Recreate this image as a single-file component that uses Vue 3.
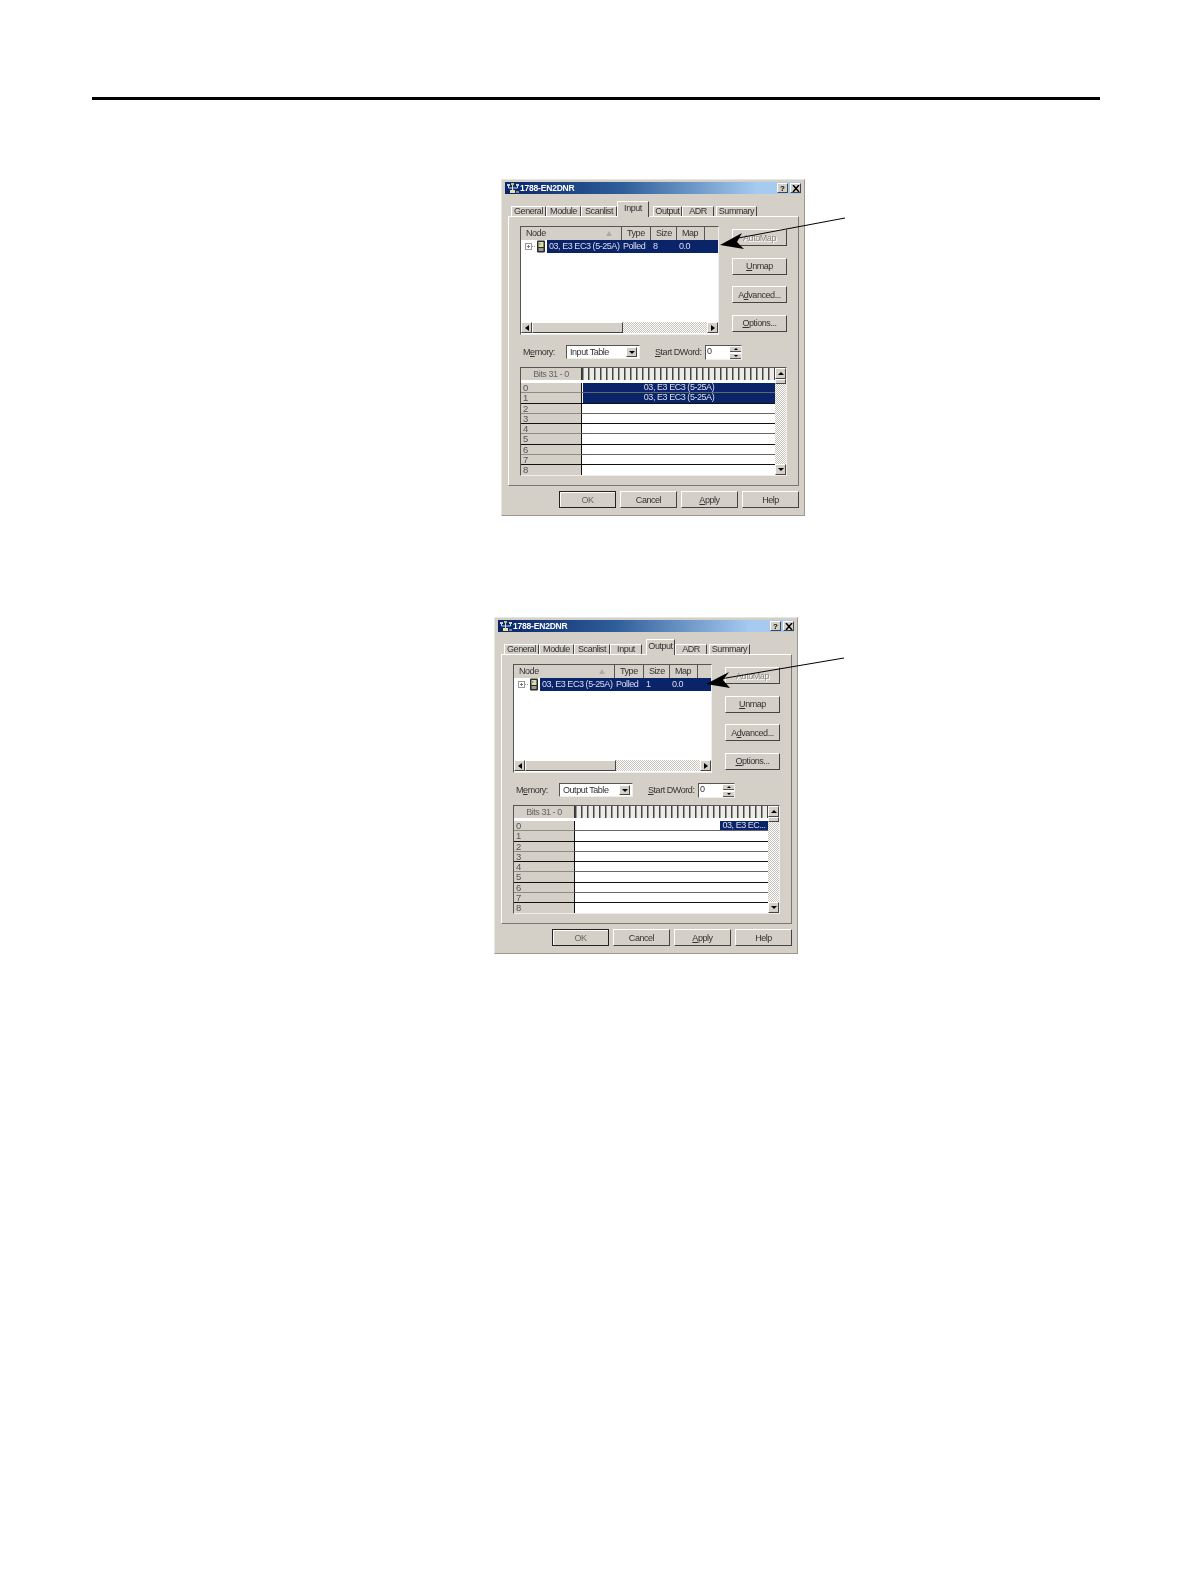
<template>
  <div class="page">
    <div class="rule"></div>
    <div
      v-for="d in dialogs"
      :key="d.name"
      class="figure"
      :class="'figure-' + d.name"
    >
      <div class="dialog">
        <div class="titlebar">
          <svg class="app-icon" width="14" height="12" viewBox="0 0 14 12">
            <rect x="1" y="2" width="3" height="2" fill="#d4d0c8" />
            <rect x="5" y="1" width="3" height="2" fill="#a8d060" />
            <rect x="10" y="2" width="3" height="2" fill="#d4d0c8" />
            <path d="M2.5 4v2h9V4M6.5 3v5" stroke="#cfe0f0" fill="none" />
            <rect x="4" y="8" width="5" height="3" fill="#e8e4a0" />
            <rect x="10" y="9" width="3" height="2" fill="#8a8a8a" />
          </svg>
          <span class="title-text">1788-EN2DNR</span>
          <span class="title-btn title-help">?</span>
          <span class="title-btn">
            <svg width="8" height="7" viewBox="0 0 8 7">
              <path d="M1 0l6 7M7 0L1 7" stroke="#000" stroke-width="1.5" />
            </svg>
          </span>
        </div>

        <div class="tabs">
          <div
            v-for="t in tabs"
            :key="t.label"
            class="tab"
            :class="{ active: t.label === d.tab }"
            :style="{ width: t.width + 'px', marginLeft: t.gap + 'px' }"
          >
            {{ t.label }}
          </div>
        </div>

        <div class="panel">
          <div class="top-row">
            <div class="list sunken">
              <div class="list-head">
                <div class="head-cell col-node">
                  Node<span class="sort-mark"></span>
                </div>
                <div class="head-cell col-type">Type</div>
                <div class="head-cell col-size">Size</div>
                <div class="head-cell col-map">Map</div>
                <div class="head-cell col-rest"></div>
              </div>
              <div class="list-row">
                <div class="tree">
                  <svg width="27" height="13" viewBox="0 0 27 13">
                    <rect x="4.5" y="3.5" width="6" height="6" fill="#fff" stroke="#999" />
                    <path d="M6 6.5h3M7.5 5v3" stroke="#777" fill="none" />
                    <path d="M11 6.5h3" stroke="#999" stroke-dasharray="1 1" fill="none" />
                    <rect x="16" y="0.5" width="8" height="12" rx="1" fill="#2a2a2a" />
                    <rect x="17.5" y="2" width="5" height="5" fill="#d8e0a0" />
                    <rect x="17.5" y="3" width="2" height="2" fill="#7f9fc0" />
                    <rect x="17.5" y="8" width="5" height="3" fill="#9a9a9a" />
                  </svg>
                </div>
                <div class="row-sel">
                  <div class="cell sel-node">03, E3 EC3 (5-25A)</div>
                  <div class="cell sel-type">Polled</div>
                  <div class="cell sel-size">{{ d.size }}</div>
                  <div class="cell sel-map">0.0</div>
                </div>
              </div>
              <div class="hscroll">
                <div class="sb-btn">
                  <span class="tri tri-left"></span>
                </div>
                <div class="hthumb"></div>
                <div class="dither"></div>
                <div class="sb-btn">
                  <span class="tri tri-right"></span>
                </div>
              </div>
            </div>
            <div class="side-btns">
              <button class="btn disabled">AutoMap</button>
              <button class="btn"><u>U</u>nmap</button>
              <button class="btn">A<u>d</u>vanced...</button>
              <button class="btn"><u>O</u>ptions...</button>
            </div>
          </div>

          <div class="memory-row">
            <span class="memory-label">M<u>e</u>mory:</span>
            <div class="select sunken">
              <span class="select-text">{{ d.memory }}</span>
              <div class="sb-btn select-btn">
                <span class="tri tri-down"></span>
              </div>
            </div>
            <span class="start-label"><u>S</u>tart DWord:</span>
            <div class="spin sunken">
              <span class="spin-text">0</span>
              <div class="spin-btns">
                <div class="spin-btn"><span class="tri tri-up tiny"></span></div>
                <div class="spin-btn"><span class="tri tri-down tiny"></span></div>
              </div>
            </div>
          </div>

          <div class="grid sunken">
            <div class="grid-main">
              <div class="grid-head">
                <div class="bits-label">Bits 31 - 0</div>
                <div class="ticks"></div>
              </div>
              <div
                v-for="r in rows"
                :key="r"
                class="grid-row"
                :class="{ 'row-dark': r % 2 === 0 }"
              >
                <div class="row-label">{{ r }}</div>
                <div class="row-body">
                  <div v-if="d.full.includes(r)" class="bar bar-full">
                    03, E3 EC3 (5-25A)
                  </div>
                  <div v-if="d.partial === r" class="bar bar-part">
                    03, E3 EC...
                  </div>
                </div>
              </div>
            </div>
            <div class="vscroll">
              <div class="sb-btn"><span class="tri tri-up"></span></div>
              <div class="vthumb"></div>
              <div class="dither"></div>
              <div class="sb-btn"><span class="tri tri-down"></span></div>
            </div>
          </div>
        </div>

        <div class="footer">
          <button class="btn foot-btn default-btn">OK</button>
          <button class="btn foot-btn">Cancel</button>
          <button class="btn foot-btn"><u>A</u>pply</button>
          <button class="btn foot-btn">Help</button>
        </div>
      </div>

      <!-- callout arrow lies over the dialog -->
      <svg class="callout" width="360" height="90" viewBox="0 0 360 90">
        <path :d="d.line" stroke="#000" stroke-width="1" fill="none" />
        <path :d="d.head" fill="#000" />
      </svg>
    </div>
  </div>
</template>

<script setup>
  const tabs = [
    { label: 'General', width: 35, gap: 0 },
    { label: 'Module', width: 35, gap: 0 },
    { label: 'Scanlist', width: 36, gap: 0 },
    { label: 'Input', width: 32, gap: 0 },
    { label: 'Output', width: 29, gap: 4 },
    { label: 'ADR', width: 32, gap: 0 },
    { label: 'Summary', width: 41, gap: 2 },
  ];

  const rows = [0, 1, 2, 3, 4, 5, 6, 7, 8];

  const dialogs = [
    {
      name: 'input',
      tab: 'Input',
      size: '8',
      memory: 'Input Table',
      full: [0, 1],
      partial: -1,
      line: 'M344 39L232 60',
      head: 'M219 66L241 54L236 63L243 70Z',
    },
    {
      name: 'output',
      tab: 'Output',
      size: '1',
      memory: 'Output Table',
      full: [],
      partial: 0,
      line: 'M350 41L226 62',
      head: 'M212 67L235 55L229 63L236 71Z',
    },
  ];
</script>

<style scoped>
  .page {
    position: relative;
    width: 1190px;
    height: 1584px;
    overflow: hidden;
    background: #fff;
    font-family: 'Liberation Sans', Arial, sans-serif;
  }
  .rule {
    width: 1008px;
    height: 3px;
    margin: 97px 0 0 92px;
    background: #000;
  }
  .figure {
    position: relative;
    width: 304px;
  }
  .figure-input {
    margin: 79px 0 0 501px;
  }
  .figure-output {
    margin: 101px 0 0 494px;
  }
  .callout {
    position: absolute;
    left: 0;
    top: 0;
    pointer-events: none;
  }
  .dialog {
    box-sizing: border-box;
    width: 304px;
    height: 337px;
    padding: 2px 3px 3px;
    background: #d4d0c8;
    border: 1px solid #e8e6e1;
    border-right-color: #9a9890;
    border-bottom-color: #9a9890;
    color: #333;
    font-size: 9px;
    letter-spacing: -0.45px;
    filter: blur(0.35px);
  }
  .titlebar {
    display: flex;
    align-items: center;
    height: 12px;
    padding: 0 0 0 1px;
    background: linear-gradient(90deg, #0a246a 0%, #2f5f9a 40%, #a6caf0 85%);
  }
  .app-icon {
    flex: none;
  }
  .title-text {
    flex: 1;
    color: #fff;
    font-size: 8.5px;
    font-weight: 700;
    letter-spacing: -0.2px;
  }
  .title-btn {
    display: flex;
    align-items: center;
    justify-content: center;
    box-sizing: border-box;
    width: 11px;
    height: 10px;
    background: #d4d0c8;
    border: 1px solid;
    border-color: #fff #444 #444 #fff;
    color: #000;
    font-size: 8px;
    font-weight: 700;
    letter-spacing: 0;
  }
  .title-help {
    margin-right: 2px;
  }
  .tabs {
    display: flex;
    align-items: flex-end;
    height: 15px;
    margin-top: 7px;
    padding-left: 6px;
    position: relative;
    z-index: 1;
  }
  .tab {
    box-sizing: border-box;
    height: 10px;
    border-right: 1px solid #444;
    border-left: 1px solid #fff;
    border-top: 1px solid #fff;
    font-size: 9px;
    line-height: 8px;
    text-align: center;
    white-space: nowrap;
  }
  .tab.active {
    height: 16px;
    margin-bottom: -1px;
    background: #d4d0c8;
    line-height: 13px;
  }
  .panel {
    box-sizing: border-box;
    width: 291px;
    height: 270px;
    margin-left: 3px;
    padding: 9px 11px;
    border: 1px solid;
    border-color: #fff #777 #777 #fff;
  }
  .sunken {
    box-sizing: border-box;
    border: 1px solid;
    border-color: #555 #eee #eee #555;
    background: #fff;
  }
  .top-row {
    display: flex;
  }
  .list {
    display: flex;
    flex-direction: column;
    width: 200px;
    height: 109px;
  }
  .list-head {
    display: flex;
    height: 13px;
    flex: none;
    background: #d4d0c8;
  }
  .head-cell {
    box-sizing: border-box;
    position: relative;
    height: 13px;
    padding-left: 5px;
    border-right: 1px solid #555;
    line-height: 13px;
  }
  .col-node {
    width: 101px;
  }
  .col-type {
    width: 29px;
  }
  .col-size {
    width: 26px;
  }
  .col-map {
    width: 28px;
  }
  .col-rest {
    flex: 1;
    border-right: none;
  }
  .sort-mark {
    position: absolute;
    right: 9px;
    top: 4px;
    border-left: 3px solid transparent;
    border-right: 3px solid transparent;
    border-bottom: 5px solid #aaa;
  }
  .list-row {
    display: flex;
    flex: none;
    height: 13px;
  }
  .tree {
    flex: none;
    width: 26px;
  }
  .tree svg {
    display: block;
  }
  .row-sel {
    flex: 1;
    display: flex;
    background: #0a246a;
    color: #dde;
    line-height: 13px;
  }
  .cell {
    box-sizing: border-box;
    overflow: hidden;
    white-space: nowrap;
    padding-left: 2px;
  }
  .sel-node {
    width: 73px;
  }
  .sel-type {
    width: 29px;
    padding-left: 3px;
  }
  .sel-size {
    width: 26px;
    padding-left: 4px;
  }
  .sel-map {
    width: 28px;
    padding-left: 4px;
  }
  .hscroll {
    display: flex;
    flex: none;
    height: 11px;
    margin-top: auto;
    margin-bottom: 1px;
  }
  .sb-btn {
    box-sizing: border-box;
    display: flex;
    flex: none;
    align-items: center;
    justify-content: center;
    width: 11px;
    height: 11px;
    background: #d4d0c8;
    border: 1px solid;
    border-color: #fff #444 #444 #fff;
  }
  .hthumb {
    flex: none;
    box-sizing: border-box;
    width: 91px;
    background: #d4d0c8;
    border: 1px solid;
    border-color: #fff #444 #444 #fff;
  }
  .dither {
    flex: 1;
    background: repeating-conic-gradient(#fff 0 25%, #c8c5bd 0 50%) 0 0 / 2px 2px;
  }
  .tri {
    width: 0;
    height: 0;
    border: 3px solid transparent;
  }
  .tri-left {
    border-left-width: 0;
    border-right: 4px solid #000;
  }
  .tri-right {
    border-right-width: 0;
    border-left: 4px solid #000;
  }
  .tri-up {
    border-top-width: 0;
    border-bottom: 3px solid #000;
  }
  .tri-down {
    border-bottom-width: 0;
    border-top: 3px solid #000;
  }
  .tri.tiny {
    border-width: 2px;
  }
  .tri-up.tiny {
    border-top-width: 0;
  }
  .tri-down.tiny {
    border-bottom-width: 0;
  }
  .side-btns {
    display: flex;
    flex-direction: column;
    gap: 11.5px;
    margin: 3px 0 0 13px;
  }
  .btn {
    box-sizing: border-box;
    display: block;
    width: 55px;
    height: 17px;
    padding: 0;
    background: #d4d0c8;
    border: 1px solid;
    border-color: #fff #444 #444 #fff;
    color: #333;
    font: inherit;
    letter-spacing: inherit;
    text-align: center;
  }
  .btn.disabled {
    color: #8a8880;
    text-shadow: 1px 1px 0 #fff;
  }
  .memory-row {
    display: flex;
    align-items: center;
    height: 14px;
    margin-top: 10px;
  }
  .memory-label {
    width: 43px;
    margin-left: 3px;
  }
  .select {
    display: flex;
    align-items: center;
    justify-content: space-between;
    width: 74px;
    height: 14px;
    padding: 0 2px;
  }
  .select-text {
    padding-left: 1px;
  }
  .select-btn {
    height: 10px;
  }
  .start-label {
    width: 50px;
    margin-left: 15px;
  }
  .spin {
    display: flex;
    justify-content: space-between;
    width: 37px;
    height: 15px;
    padding-left: 1px;
  }
  .spin-text {
    line-height: 11px;
  }
  .spin-btns {
    display: flex;
    flex-direction: column;
    gap: 1px;
    width: 11px;
  }
  .spin-btn {
    display: flex;
    align-items: center;
    justify-content: center;
    flex: 1;
    background: #d4d0c8;
    border-top: 1px solid #fff;
    border-bottom: 1px solid #555;
  }
  .grid {
    display: flex;
    width: 267px;
    height: 109px;
    margin-top: 8px;
    overflow: hidden;
  }
  .grid-main {
    flex: 1;
    min-width: 0;
  }
  .grid-head {
    display: flex;
    height: 12px;
    margin-bottom: 3px;
    background: #d4d0c8;
  }
  .bits-label {
    box-sizing: border-box;
    flex: none;
    width: 61px;
    border-right: 1px solid #333;
    color: #666;
    line-height: 12px;
    text-align: center;
  }
  .ticks {
    flex: 1;
    background: repeating-linear-gradient(90deg, #444 0 1px, #999 1px 2px, #ecebe6 2px 6px);
  }
  .grid-row {
    display: flex;
    box-sizing: border-box;
    height: 10.3px;
  }
  .row-label {
    box-sizing: border-box;
    flex: none;
    width: 61px;
    padding-left: 2px;
    background: #d4d0c8;
    border-right: 1px solid #111;
    border-bottom: 1px solid #111;
    color: #555;
    font-size: 9.5px;
    line-height: 10px;
  }
  .row-dark .row-label {
    border-bottom-color: #8d8b85;
  }
  .row-body {
    position: relative;
    flex: 1;
    display: flex;
    justify-content: flex-end;
    box-sizing: border-box;
    border-bottom: 1px solid #111;
  }
  .row-dark .row-body {
    border-bottom-color: #666;
  }
  .bar {
    background: #0a246a;
    color: #dde;
    line-height: 9px;
    text-align: center;
    white-space: nowrap;
    overflow: hidden;
  }
  .bar-full {
    flex: 1;
    margin-left: 1px;
  }
  .bar-part {
    width: 48px;
  }
  .vscroll {
    display: flex;
    flex-direction: column;
    flex: none;
    width: 11px;
  }
  .vthumb {
    flex: none;
    height: 5px;
    box-sizing: border-box;
    background: #d4d0c8;
    border: 1px solid;
    border-color: #fff #444 #444 #fff;
  }
  .footer {
    display: flex;
    justify-content: flex-end;
    gap: 4px;
    margin: 5px 0 0;
    padding-right: 2px;
  }
  .foot-btn {
    width: 57px;
  }
  .default-btn {
    border-color: #222;
    box-shadow: inset 1px 1px 0 #fff;
    color: #666;
  }
</style>
